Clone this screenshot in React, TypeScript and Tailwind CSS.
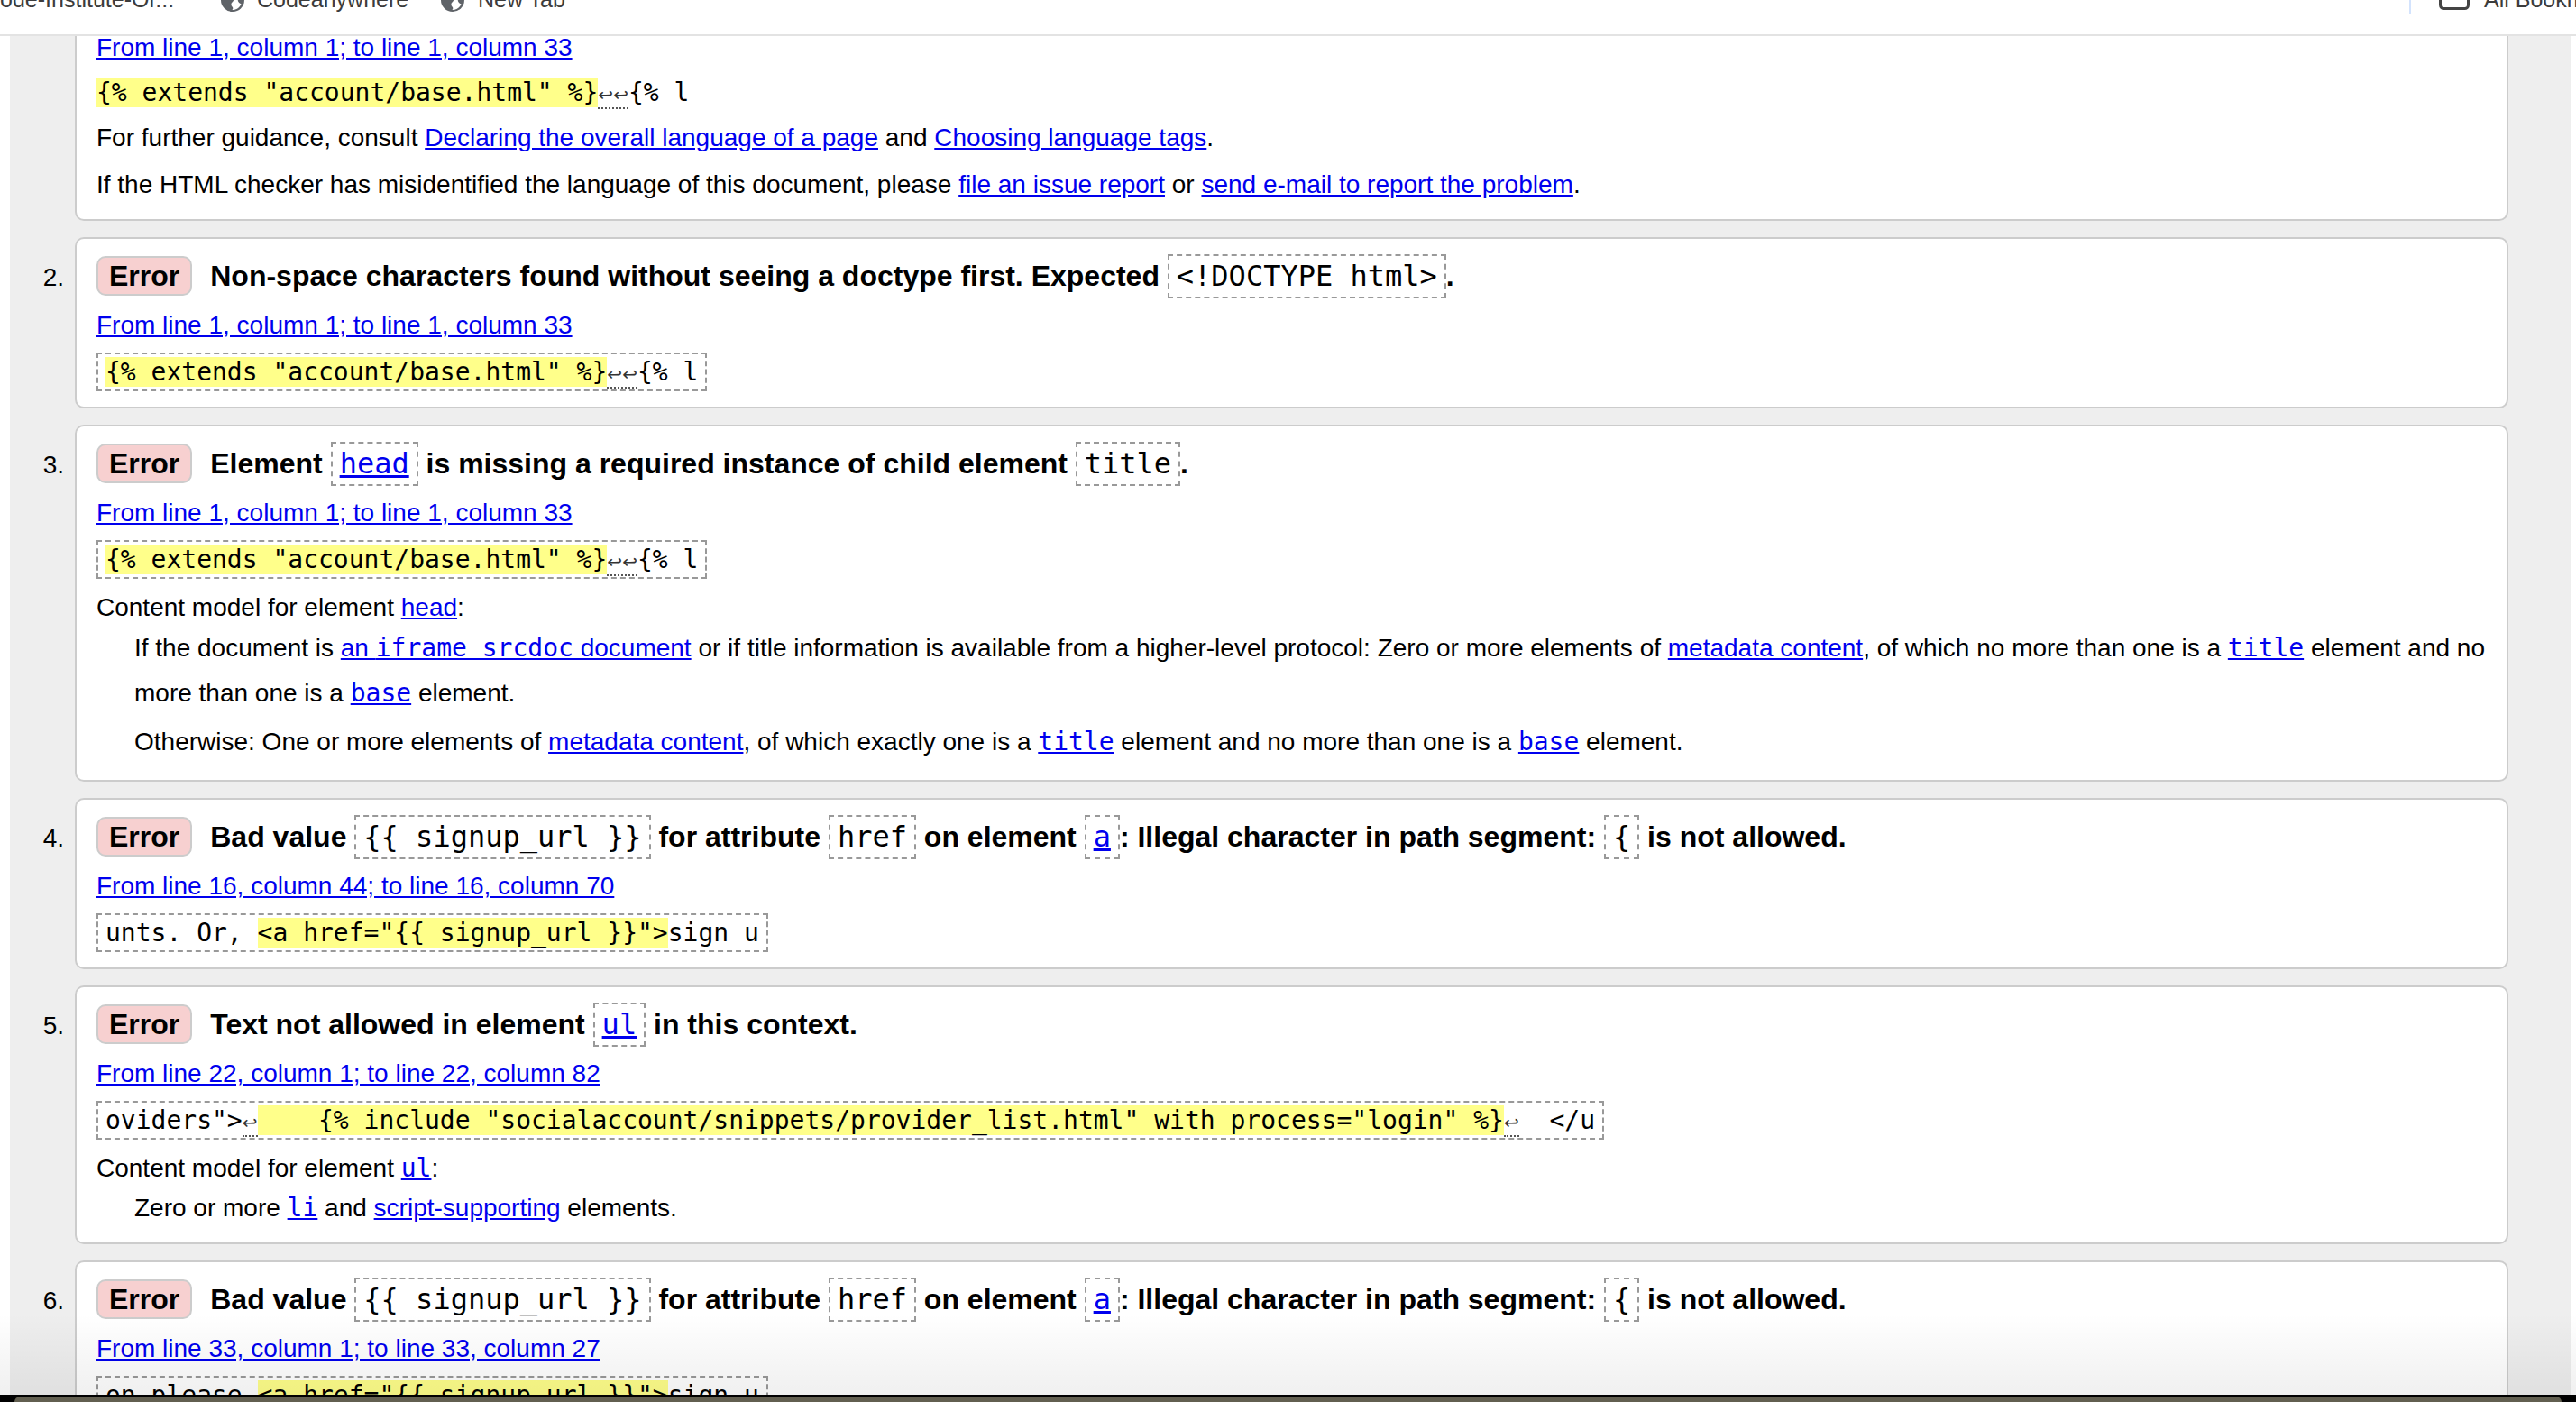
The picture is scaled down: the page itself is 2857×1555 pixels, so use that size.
import React from "react";

type Kids = { children?: React.ReactNode };

const A = ({ children, code }: Kids & { code?: boolean }) => (
  <a
    href="#"
    className={
      code
        ? "text-[#0000ee] underline font-['DejaVu_Sans_Mono',monospace]"
        : "text-[#0000ee] underline"
    }
  >
    {children}
  </a>
);

// dashed inline box inside the bold message line
const Box = ({ children }: Kids) => (
  <code className="inline-block border-2 border-dashed border-[#999999] px-[8px] py-[4px] font-['DejaVu_Sans_Mono',monospace] text-[32px] font-normal leading-[37px]">
    {children}
  </code>
);

const Message = ({ children, label = "Error" }: Kids & { label?: string }) => (
  <p className="whitespace-nowrap text-[32px] font-bold leading-[40px]">
    <span className="mr-[20px] inline-block rounded-[10px] border-2 border-[#cccccc] bg-[#f7d0d0] px-[12px] leading-[40px]">
      {label}
    </span>
    {children}
  </p>
);

const Loc = ({ children }: Kids) => (
  <p className="mt-[10px] whitespace-nowrap leading-[40px]">
    <A>{children}</A>
  </p>
);

const Extract = ({ children }: Kids) => (
  <p className="mt-[10px] whitespace-pre border-2 border-dashed border-[#999999] px-[8px] font-['DejaVu_Sans_Mono',monospace] text-[28px] leading-[39px]">
    {children}
  </p>
);

const Hl = ({ children }: Kids) => <span className="bg-[#ffff8a]">{children}</span>;

const Lf = ({ n = 1 }: { n?: number }) => (
  <span className="border-b-2 border-dotted border-[#555555]">
    {Array.from({ length: n }).map((_, i) => (
      <span
        key={i}
        className="inline-block w-[16.86px] text-center font-['DejaVu_Sans',sans-serif] text-[20px] leading-none text-[#333333]"
      >
        ↩
      </span>
    ))}
  </span>
);

const Item = ({ n, children }: Kids & { n: number }) => (
  <li className="flex">
    <div className="w-[72px] shrink-0 pr-[12px] pt-[25px] text-right leading-[40px]">{n}.</div>
    <div className="mr-[70px] flex min-w-0 flex-1 flex-col items-start rounded-[10px] border-2 border-[#cccccc] bg-white px-[22px] pt-[17px] pb-[17px]">
      {children}
    </div>
  </li>
);

const Globe = ({ className }: { className?: string }) => (
  <svg viewBox="0 0 26 26" className={className}>
    <circle cx="13" cy="13" r="13" fill="#5f6368" />
    <path
      d="M15 3.5c-2.5 1.5-3 4-1.5 6 1.5 2 1 4.5-1 6-1.5 1.2-1.5 3.5 0 5 1.2 1.2 1 2.6-.2 3.6 4.6.2 8.6-2.6 10.2-6.8-1.8-.4-3.2-1.6-3.6-3.2-.4-1.8.8-3.4 2.6-4 .4-2.8-2.2-5.6-6.5-6.6z"
      fill="#ffffff"
    />
  </svg>
);

const Folder = ({ className }: { className?: string }) => (
  <svg viewBox="0 0 34 24" className={className}>
    <rect x="1.5" y="-6" width="31" height="28.5" rx="4" fill="none" stroke="#444444" strokeWidth="3" />
  </svg>
);

const App = () => {
  const extends_ = '{% extends "account/base.html" %}';
  const signup = '<a href="{{ signup_url }}">';

  return (
    <div className="flex h-[1555px] w-full flex-col overflow-hidden bg-white font-['Liberation_Sans',Arial,sans-serif] text-[28px] text-black">
      {/* bookmarks bar, mostly scrolled off */}
      <header className="flex h-[40px] shrink-0 items-start overflow-hidden border-b-2 border-[#e3e3e3] bg-white">
        <div className="-mt-[13px] flex w-full items-start whitespace-nowrap text-[25px] leading-[25px] text-[#3c3c3c]">
          <span className="-ml-[18px] w-[228px] shrink-0">Code-Institute-Or...</span>
          <Globe className="ml-[35px] h-[26px] w-[26px] shrink-0" />
          <span className="ml-[14px] w-[167px] shrink-0">Codeanywhere</span>
          <Globe className="ml-[37px] h-[26px] w-[26px] shrink-0" />
          <span className="ml-[15px] shrink-0">New Tab</span>
          <div className="ml-auto flex w-[185px] shrink-0 items-start overflow-hidden">
            <div className="mt-[13px] h-[15px] w-[2px] shrink-0 bg-[#d3e3fd]" />
            <Folder className="ml-[31px] h-[24px] w-[34px] shrink-0" />
            <span className="ml-[16px] shrink-0">All Bookmarks</span>
          </div>
        </div>
      </header>

      <main className="relative flex-1 overflow-hidden bg-white">
        <div className="ml-[11px] mr-[5px] flex h-full flex-col bg-[#eeeeee]">
          <ol className="-mt-[85px] flex flex-col gap-[18px]">
            <Item n={1}>
              <Message label="Warning">
                Consider adding a <Box>lang</Box> attribute to the <Box>html</Box> start tag to declare the language of this document.
              </Message>
              <Loc>From line 1, column 1; to line 1, column 33</Loc>
              <p className="mt-[10px] whitespace-pre font-['DejaVu_Sans_Mono',monospace] leading-[40px]">
                <Hl>{extends_}</Hl>
                <Lf n={2} />
                {"{% l"}
              </p>
              <p className="mt-[10px] whitespace-nowrap leading-[40px]">
                For further guidance, consult <A>Declaring the overall language of a page</A> and{" "}
                <A>Choosing language tags</A>.
              </p>
              <p className="mt-[12px] mb-[1px] whitespace-nowrap leading-[40px]">
                If the HTML checker has misidentified the language of this document, please{" "}
                <A>file an issue report</A> or <A>send e-mail to report the problem</A>.
              </p>
            </Item>

            <Item n={2}>
              <Message>
                Non-space characters found without seeing a doctype first. Expected <Box>{"<!DOCTYPE html>"}</Box>.
              </Message>
              <Loc>From line 1, column 1; to line 1, column 33</Loc>
              <Extract>
                <Hl>{extends_}</Hl>
                <Lf n={2} />
                {"{% l"}
              </Extract>
            </Item>

            <Item n={3}>
              <Message>
                Element{" "}
                <Box>
                  <A>head</A>
                </Box>{" "}
                is missing a required instance of child element <Box>title</Box>.
              </Message>
              <Loc>From line 1, column 1; to line 1, column 33</Loc>
              <Extract>
                <Hl>{extends_}</Hl>
                <Lf n={2} />
                {"{% l"}
              </Extract>
              <p className="mt-[12px] leading-[40px]">
                Content model for element <A>head</A>:
              </p>
              <div className="whitespace-nowrap pl-[42px] leading-[50px]">
                <p>
                  If the document is{" "}
                  <A>
                    an <code className="font-['DejaVu_Sans_Mono',monospace]">iframe srcdoc</code> document
                  </A>{" "}
                  or if title information is available from a higher-level protocol: Zero or more elements of{" "}
                  <A>metadata content</A>, of which no more than one is a <A code>title</A> element and no
                  <br />
                  more than one is a <A code>base</A> element.
                </p>
                <p className="mt-[4px]">
                  Otherwise: One or more elements of <A>metadata content</A>, of which exactly one is a{" "}
                  <A code>title</A> element and no more than one is a <A code>base</A> element.
                </p>
              </div>
            </Item>

            <Item n={4}>
              <Message>
                Bad value <Box>{"{{ signup_url }}"}</Box> for attribute <Box>href</Box> on element{" "}
                <Box>
                  <A>a</A>
                </Box>
                : Illegal character in path segment: <Box>{"{"}</Box> is not allowed.
              </Message>
              <Loc>From line 16, column 44; to line 16, column 70</Loc>
              <Extract>
                {"unts. Or, "}
                <Hl>{signup}</Hl>
                {"sign u"}
              </Extract>
            </Item>

            <Item n={5}>
              <Message>
                Text not allowed in element{" "}
                <Box>
                  <A>ul</A>
                </Box>{" "}
                in this context.
              </Message>
              <Loc>From line 22, column 1; to line 22, column 82</Loc>
              <Extract>
                {'oviders">'}
                <Lf />
                <Hl>{'    {% include "socialaccount/snippets/provider_list.html" with process="login" %}'}</Hl>
                <Lf />
                {"  </u"}
              </Extract>
              <p className="mt-[12px] leading-[40px]">
                Content model for element <A code>ul</A>:
              </p>
              <p className="mt-[2px] pl-[42px] leading-[43px]">
                Zero or more <A code>li</A> and <A>script-supporting</A> elements.
              </p>
            </Item>

            <Item n={6}>
              <Message>
                Bad value <Box>{"{{ signup_url }}"}</Box> for attribute <Box>href</Box> on element{" "}
                <Box>
                  <A>a</A>
                </Box>
                : Illegal character in path segment: <Box>{"{"}</Box> is not allowed.
              </Message>
              <Loc>From line 33, column 1; to line 33, column 27</Loc>
              <Extract>
                {"on please "}
                <Hl>{signup}</Hl>
                {"sign u"}
              </Extract>
            </Item>
          </ol>
        </div>
        <div className="pointer-events-none absolute inset-x-0 bottom-0 h-[90px] bg-linear-to-b from-transparent to-black/[0.06]" />
      </main>

      {/* edge of the desktop below the window */}
      <div className="h-[8px] shrink-0 bg-black px-[16px] pt-[2px]">
        <div className="h-full rounded-t-[12px] bg-[#625f50]" />
      </div>
    </div>
  );
};

export default App;
